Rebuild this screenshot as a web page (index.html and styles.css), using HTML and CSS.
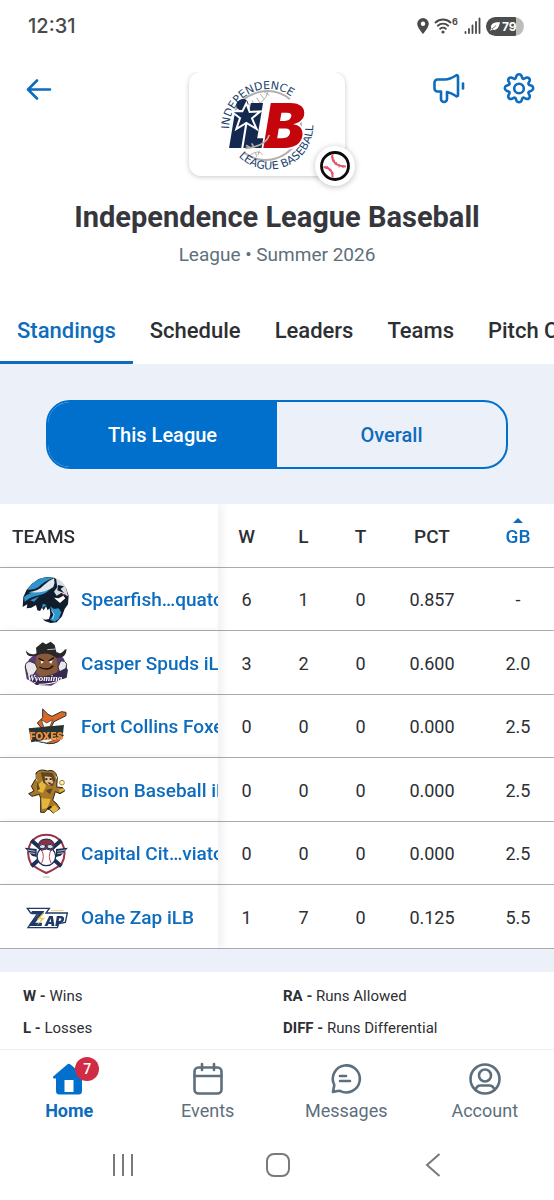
FILE: index.html
```html
<!DOCTYPE html>
<html lang="en">
<head>
  <meta charset="UTF-8" />
  <meta name="viewport" content="width=device-width, initial-scale=1" />
  <title>Independence League Baseball – Standings</title>
  <link rel="stylesheet" href="styles.css">
</head>
<body>

  <!-- Status bar -->
  <div class="status-bar">
    <span class="clock">12:31</span>
    <div class="status-icons">
      <svg width="12" height="18" viewBox="0 0 12 18"><path fill="#4a4a4a" fill-rule="evenodd" d="M6 1a5.800 5.800 0 0 0-5.800 5.800C.2 10.800 6 17 6 17s5.800-6.200 5.800-10.200A5.800 5.800 0 0 0 6 1zm0 3.600a2.200 2.200 0 1 1 0 4.400 2.200 2.200 0 0 1 0-4.400z"/></svg>
      <svg width="25" height="18" viewBox="0 0 25 18">
        <g fill="none" stroke="#4a4a4a" stroke-width="1.900" stroke-linecap="round">
          <path d="M1.500 5.500a11 11 0 0 1 15 0"/>
          <path d="M3.800 8.700a7.500 7.500 0 0 1 10.400 0"/>
          <path d="M6.200 11.800a4 4 0 0 1 5.600 0"/>
        </g>
        <circle cx="9" cy="15" r="1.600" fill="#4a4a4a"/>
        <text class="wifi-gen" x="18" y="8">6</text>
      </svg>
      <svg width="17" height="18" viewBox="0 0 17 18"><path stroke="#4a4a4a" stroke-width="1.800" stroke-linecap="round" d="M1.500 15v1M5 12v4M8.500 8.500V16M12 5v11M15.500 1.500V16"/></svg>
      <div class="battery">
        <svg width="10" height="9" viewBox="0 0 10 9"><path fill="#fff" d="M10 0C6 .5 1 .5 1 5c0 .8.200 1.300.5 1.800L0 8.200l.6.600 1.600-1.300C6.500 9 9 6 10 0z"/><path stroke="#4d4d4d" stroke-width=".7" d="M2 7l4-3.500"/></svg>
        <span>79</span>
      </div>
    </div>
  </div>

  <!-- League header -->
  <header class="league-header">
    <div class="header-row">
      <button class="icon-btn" aria-label="Back">
        <svg width="36" height="36" viewBox="0 0 36 36"><path d="M33 17.500H11.500M20 8.500L11 17.500 20 26.500"/></svg>
      </button>

      <div class="league-logo">
        <div class="logo-card">
          <svg width="156" height="104" viewBox="27 36 468 312" role="img" aria-label="iLB logo">
            <defs>
              <path id="arcTop" d="M147 207a118 120 0 1 1 236 0"/>
              <path id="arcBottom" d="M176 289a130 130 0 0 0 219-124"/>
            </defs>
            <g fill="none" stroke="#b3afad" stroke-width="6">
              <path d="M164 155a108 108 0 0 1 166-37"/>
              <path d="M362 182a106 106 0 0 1-170 96"/>
              <path stroke-width="3" d="M205 145q50-12 60-52M205 130l14 22M216 122l14 22M230 113l12 20M240 102l14 16M250 94l18 12M212 284q24-16 36 0M226 276l4 14M238 272l-4 14M350 185l14 20M350 225l14-12"/>
            </g>
            <text class="logo-ring"><textPath href="#arcTop">INDEPENDENCE</textPath></text>
            <text class="logo-ring"><textPath href="#arcBottom">LEAGUE BASEBALL</textPath></text>
            <g class="logo-letters">
              <text x="146" y="265">i</text>
              <text x="190" y="265">L</text>
              <text class="logo-b" x="250" y="265">B</text>
            </g>
            <path d="M196 265q60-5 72-40M198 256l14 8M215 250l6 10" fill="none" stroke="#b3afad" stroke-width="5"/>
            <path fill="#14294f" stroke="#fff" stroke-width="6" d="M199 130l10 26 32-2-25 21 14 32-31-18-30 18 11-33-27-20h34z"/>
          </svg>
        </div>
        <div class="sport-badge">
          <svg width="32" height="32" viewBox="0 0 32 32">
            <circle cx="16" cy="16" r="13.500" fill="#fff" stroke="#0b0b0b" stroke-width="2.800"/>
            <g fill="none" stroke="#e8526b" stroke-width="2">
              <path d="M13.500 4.500c-1.500 6.500 4 12 13.500 12"/>
              <path d="M4.500 17c6.500.5 9.500 4.500 9 10.500"/>
              <path stroke-width="1" d="M12 7l3 1M13 11l3-1M16 15l1.500-3M20 17.500l.5-3M24 18v-3M7 19l1.500-3M10 21l2-2M12 24l3-1"/>
            </g>
          </svg>
        </div>
      </div>

      <div class="header-actions">
        <button class="icon-btn" aria-label="Announcements">
          <svg width="36" height="36" viewBox="0 0 36 36"><path d="M6.500 7.500H14c4 0 7-1.500 11-4a1.200 1.200 0 0 1 2 1v18.500a1.200 1.200 0 0 1-2 1c-3-2-6-3.500-9-4V27a3 3 0 0 1-6 0V19.500H6.500a3 3 0 0 1-3-3v-6a3 3 0 0 1 3-3z"/><path d="M32 11.500v5"/></svg>
        </button>
        <button class="icon-btn" aria-label="Settings">
          <svg width="36" height="36" viewBox="0 0 36 36"><path d="M15.500 3.800c1-2 4-2 5 0l.7 2c.3.900 1.300 1.300 2.100.9l1.900-1c2.100-.9 4.200 1.200 3.400 3.300l-1 1.900c-.4.800 0 1.800.9 2.100l2.100.7c2.100 1 2.100 4 0 5l-2.100.7c-.9.300-1.300 1.300-.9 2.100l1 1.900c.8 2.200-1.300 4.300-3.400 3.400l-1.900-1c-.8-.4-1.800 0-2.100.9l-.7 2c-1 2.100-4 2.100-5 0l-.7-2c-.3-.9-1.300-1.300-2.100-.9l-1.900 1c-2.100.9-4.200-1.200-3.400-3.400l1-1.900c.4-.8 0-1.800-.9-2.100l-2.100-.7c-2.100-1-2.100-4 0-5l2.100-.7c.9-.3 1.300-1.300.9-2.100l-1-1.900C6.600 6.900 8.700 4.800 10.800 5.700l1.900 1c.8.400 1.800 0 2.100-.9z"/><circle cx="18" cy="16.500" r="4.800"/></svg>
        </button>
      </div>
    </div>

    <h1>Independence League Baseball</h1>
    <p class="subtitle">League • Summer 2026</p>
  </header>

  <!-- Section tabs -->
  <nav class="tabs">
    <a href="#standings" class="active">Standings</a>
    <a href="#schedule">Schedule</a>
    <a href="#leaders">Leaders</a>
    <a href="#teams">Teams</a>
    <a href="#pitch">Pitch Count</a>
  </nav>

  <main>
    <div class="toggle-band">
      <div class="toggle">
        <button class="selected">This League</button>
        <button>Overall</button>
      </div>
    </div>

    <!-- Standings -->
    <div class="table-scroll">
      <table class="standings">
        <colgroup>
          <col class="col-team"><col class="col-num"><col class="col-num"><col class="col-num"><col class="col-wide"><col class="col-wide">
        </colgroup>
        <thead>
          <tr>
            <th class="team" scope="col">TEAMS</th>
            <th scope="col">W</th>
            <th scope="col">L</th>
            <th scope="col">T</th>
            <th scope="col">PCT</th>
            <th scope="col" class="sorted" aria-sort="ascending">GB</th>
          </tr>
        </thead>
        <tbody>
          <tr>
            <td class="team"><div class="team-cell">
              <svg width="48" height="48" viewBox="36 33 144 144">
                <path fill="#101d2c" d="M40 96l10-22 16-18 20-14 24-6 22 2 22 12 14 18 8 24-2 26-10 14-8 22-16 18-18 2-18-6-12-16-2-14-8-2-4-16-14 8-14 2 2-12-14 8z"/>
                <path fill="#2f95cf" d="M52 74q18-28 52-37l28 1q-32 12-46 28-14 10-34 8zM42 96q16-14 52-20l34-16q-12 24-38 30-26 4-46 20z"/>
                <path fill="#dfe8ee" d="M56 82q30-4 46-22 12-12 30-20 4 14-2 26-26 20-74 16z"/>
                <path fill="#d4dde3" d="M138 40q20 8 30 28l6 26-20-10-14 8-8-12 10-14z"/>
                <path fill="#101d2c" d="M144 60l18 4-10 8 10 12-20-8z"/>
                <path fill="#fff" d="M88 142l8-14 5 8 7-12 5 12 6-6 2 18-4 14-12 2-14-8zM132 98l14 2 14-8 6 8-16 14z"/>
                <path fill="#2f95cf" d="M120 124l12 8 14-2 8 12-8 20-12 8-14-6 10-14zM98 116l12 4-14 10zM60 106l28-12-16 16z"/>
                <path fill="#b92232" d="M156 88l12-2-8 8z"/>
                <path fill="none" stroke="#fff" stroke-width="2" d="M96 152l10-4M124 136l8 12-4 14"/>
              </svg>
              <a href="#team-1">Spearfish…quatch</a>
            </div></td>
            <td>6</td><td>1</td><td>0</td><td>0.857</td><td>-</td>
          </tr>
          <tr>
            <td class="team"><div class="team-cell">
              <svg width="48" height="48" viewBox="36 223 144 144">
                <path fill="#5b3a78" d="M44 304l14-24 24-20h62l18 20 10 30-8 26-40 24-42-2-32-18z"/>
                <path fill="#8a5a38" d="M80 270q30-14 58 0l6 40q-8 26-36 26t-34-28z"/>
                <path fill="#292829" d="M48 254q10 16 32 10l-2-18 20-16 10 6 14-8 12 10 6 24q14 4 24-10l6-2q-2 30-32 26-28-22-60-6-30 8-30-16z"/>
                <path fill="none" stroke="#111" stroke-width="4" d="M86 278l16 8M132 276l-16 10M88 304q24 14 42-4"/>
                <path fill="#fff" d="M92 286l10 2-8 6zM128 284l-12 4 8 6z"/>
                <path fill="#e9e9ec" stroke="#333" stroke-width="3" d="M46 304q0-18 16-16l14 6 6 16-12 18-16 2zM144 304l8-18q14-2 18 10l-4 20-16 6z"/>
                <path fill="#392950" d="M54 330q50 14 112-22l8 4-4 24q-44 16-92 22z"/>
                <text class="mark-script" x="52" y="346">Wyoming</text>
                <path fill="none" stroke="#fff" stroke-width="3" d="M86 356q40 0 72-14"/>
                <path stroke="#bbb" stroke-width="3" d="M112 252l26-2"/>
              </svg>
              <a href="#team-2">Casper Spuds iLB</a>
            </div></td>
            <td>3</td><td>2</td><td>0</td><td>0.600</td><td>2.0</td>
          </tr>
          <tr>
            <td class="team"><div class="team-cell">
              <svg width="48" height="48" viewBox="36 24 144 144">
                <path fill="#dc6727" stroke="#283431" stroke-width="3" d="M98 42l16 16 12 6 28-14 14 2 0 10-36 18-8 16-26 8-16-20 16-16zM88 140l72-20q-12 28-44 26z"/>
                <path fill="#fff" stroke="#283431" stroke-width="2" d="M94 74l16 10 18-10-8 20-18 4zM78 138l66-14-8 10-26 10z"/>
                <path fill="#283431" d="M56 100l106-10-4 34-94 18z"/>
                <text class="mark-foxes" x="59" y="134">FOXES</text>
              </svg>
              <a href="#team-3">Fort Collins Foxes</a>
            </div></td>
            <td>0</td><td>0</td><td>0</td><td>0.000</td><td>2.5</td>
          </tr>
          <tr>
            <td class="team"><div class="team-cell">
              <svg width="48" height="48" viewBox="36 214 144 144">
                <path fill="#a77825" stroke="#2c2419" stroke-width="3" d="M78 232q12-14 34-6 24-8 30 20l-2 28 18 2 6 10-14 8-14-6-8 26 10 8 12 16-20 14-16-14-10 12H92V308l-4-12-22 6-10-8 16-8-8-14 14-24z"/>
                <path fill="#e5b63d" d="M82 270l18-18 8 20-10 20-20-8zM94 308l28 2-10 28-16 2zM118 340l16-12 12 12-14 12zM146 282l16-4 2 6-14 6z"/>
                <path fill="#5c4426" d="M92 230l36 2 8 20-8 20-28-10zM82 258l8 22-10 6zM106 284l22-6-8 18z"/>
                <path fill="#e9c18a" d="M104 242l20 2 6 18-14 6-10-8z"/>
                <path fill="#261f17" d="M106 248h6v5h-6zM119 248h6v5h-6zM112 260l14 2-8 4zM110 338l12-8 4 4-12 10z"/>
                <path fill="none" stroke="#fff" stroke-width="2" d="M78 236q-4 14 4 20M138 240l2 10"/>
                <circle cx="156" cy="261" r="7" fill="#fff3c5" stroke="#b08427" stroke-width="3"/>
              </svg>
              <a href="#team-4">Bison Baseball iLB</a>
            </div></td>
            <td>0</td><td>0</td><td>0</td><td>0.000</td><td>2.5</td>
          </tr>
          <tr>
            <td class="team"><div class="team-cell">
              <svg width="48" height="48" viewBox="36 15 144 144">
                <path fill="#fff" stroke="#9b3449" stroke-width="6" d="M62 54q16-25 47-25t47 25q16 30-1 62-16 14-46 28-30-14-46-28-17-32-1-62z"/>
                <path stroke="#1d2f55" stroke-width="12" d="M64 46l90 78M154 46l-90 78"/>
                <path fill="#1d2f55" d="M44 68l36 4v24l-14-4zM174 68l-36 4v24l14-4z"/>
                <path stroke="#fff" stroke-width="2" d="M52 75l24 4M58 83l18 3M166 75l-24 4M160 83l-18 3"/>
                <circle cx="109" cy="94" r="28" fill="#fff" stroke="#1d2f55" stroke-width="4"/>
                <path fill="none" stroke="#c34555" stroke-width="3" d="M94 74q12 20 0 42M124 74q-12 20 0 42"/>
                <path fill="#8b3145" stroke="#1d2f55" stroke-width="3" d="M84 68q0-26 25-26t25 26l-10 8q-15-8-30 0z"/>
                <path fill="#d7dde6" stroke="#1d2f55" stroke-width="3" d="M88 62q10-8 20 0-4 12-18 8zM110 62q10-8 20 0 0 12-16 8z"/>
                <path stroke="#8aa58d" stroke-width="2" d="M99 156h20"/>
              </svg>
              <a href="#team-5">Capital Cit…viators</a>
            </div></td>
            <td>0</td><td>0</td><td>0</td><td>0.000</td><td>2.5</td>
          </tr>
          <tr>
            <td class="team"><div class="team-cell">
              <svg width="48" height="48" viewBox="36 205 144 144">
                <path fill="#fff" stroke="#1f3a68" stroke-width="4" d="M52 248h66l-10 14h64l-6 28-20 4-4 12H54l30-44H62z"/>
                <text class="mark-zap-z" x="58" y="301">Z</text>
                <text class="mark-zap" x="104" y="301">AP</text>
                <path fill="#efc951" d="M104 256l-24 26 14-2-14 20 26-24-14 1z"/>
                <path stroke="#e8cf87" stroke-width="3" d="M122 255h38"/>
              </svg>
              <a href="#team-6">Oahe Zap iLB</a>
            </div></td>
            <td>1</td><td>7</td><td>0</td><td>0.125</td><td>5.5</td>
          </tr>
        </tbody>
      </table>
    </div>

    <!-- Abbreviation key -->
    <div class="legend">
      <div><b>W -</b> Wins</div>
      <div><b>RA -</b> Runs Allowed</div>
      <div><b>L -</b> Losses</div>
      <div><b>DIFF -</b> Runs Differential</div>
    </div>
  </main>

  <!-- App navigation -->
  <nav class="bottom-nav">
    <a href="#home" class="active">
      <span class="nav-icon">
        <svg width="36" height="36" viewBox="0 0 36 36"><path fill="#0070cc" fill-rule="evenodd" d="M16.200 3.500a2.500 2.500 0 0 1 3.300 0l14 11.800c1 1 .4 2.200-.8 2.200h-1.700V30a3.500 3.500 0 0 1-3.500 3.500h-19A3.500 3.500 0 0 1 5 30V17.500H3.300c-1.300 0-1.900-1.200-.8-2.200zM13.500 19v12h9V19z"/></svg>
        <span class="badge">7</span>
      </span>
      Home
    </a>
    <a href="#events">
      <span class="nav-icon">
        <svg width="36" height="36" viewBox="0 0 36 36"><rect x="4.500" y="6.500" width="27" height="26" rx="4"/><path d="M4.500 15h27M12 3v6M24 3v6"/></svg>
      </span>
      Events
    </a>
    <a href="#messages">
      <span class="nav-icon">
        <svg width="36" height="36" viewBox="0 0 36 36"><path d="M5 31l1.300-7A13.500 13.500 0 1 1 12 29.800c-2.200.2-4.500.7-7 1.200z"/><path d="M12 15h6M12 20h10"/></svg>
      </span>
      Messages
    </a>
    <a href="#account">
      <span class="nav-icon">
        <svg width="36" height="36" viewBox="0 0 36 36"><circle cx="18" cy="18" r="14.500"/><circle cx="18" cy="14.500" r="6"/><path d="M8.500 29c1-3.500 3-4.500 5-4.500h9c2 0 4 1 5 4.500"/></svg>
      </span>
      Account
    </a>
  </nav>

  <!-- System navigation -->
  <div class="system-nav">
    <button aria-label="Recent apps"><svg width="24" height="24" viewBox="0 0 24 24"><path d="M3 1v22M12 1v22M21 1v22"/></svg></button>
    <button aria-label="Home screen"><svg width="24" height="24" viewBox="0 0 24 24"><rect x="1" y="1" width="22" height="22" rx="7"/></svg></button>
    <button aria-label="Go back"><svg width="24" height="24" viewBox="0 0 24 24"><path d="M18.500 1L6 12l12.500 11"/></svg></button>
  </div>

</body>
</html>
```
FILE: styles.css
```css
:root {
  --blue: #0070cc;
  --blue-text: #0d6cbd;
  --ink: #2d2f33;
  --slate: #5d6f7c;
  --band: #ebf0f9;
  --line: #a9abb0;
}

*, *::before, *::after { box-sizing: border-box; }

body {
  margin: 0;
  min-height: 100vh;
  display: flex;
  flex-direction: column;
  font-family: Roboto, "Liberation Sans", sans-serif;
  font-size: 18px;
  line-height: 24px;
  color: var(--ink);
  background: #fff;
  overflow-x: hidden;
}
a { text-decoration: none; }
svg { display: block; flex: none; }
button {
  font: inherit;
  padding: 0;
  border: 0;
  background: none;
  cursor: pointer;
}

/* Status bar */
.status-bar {
  display: flex;
  align-items: center;
  justify-content: space-between;
  height: 52px;
  padding: 0 30px 0 28px;
}
.clock {
  font-family: Inter, sans-serif;
  font-size: 20px;
  font-weight: 500;
  color: #4a4a4a;
}
.status-icons {
  display: flex;
  align-items: center;
  gap: 5px;
}
.wifi-gen { font: 700 9px Inter, sans-serif; fill: #4a4a4a; }
.battery {
  display: flex;
  align-items: center;
  gap: 2px;
  height: 19px;
  width: 38px;
  padding-left: 4px;
  border-radius: 10px;
  background: linear-gradient(90deg, #4d4d4d 79%, #bdbdbd 79%);
  color: #fff;
  font: 700 12px Inter, sans-serif;
}

/* League header */
.league-header {
  padding-top: 20px;
  text-align: center;
}
.header-row {
  display: grid;
  grid-template-columns: 1fr auto 1fr;
  align-items: start;
  padding: 0 17px;
}
.icon-btn { width: 36px; height: 36px; }
.icon-btn svg {
  fill: none;
  stroke: var(--blue-text);
  stroke-width: 2.6;
  stroke-linecap: round;
  stroke-linejoin: round;
}
.header-actions {
  display: flex;
  justify-content: flex-end;
  gap: 34px;
}
.league-logo {
  position: relative;
  padding-right: 20px;
}
.logo-card {
  border-radius: 12px;
  background: #fff;
  box-shadow: 0 1px 5px rgba(0, 0, 0, 0.22);
  clip-path: inset(0 -8px -8px -8px);
}
.logo-ring { font: 33px "DejaVu Sans", sans-serif; fill: #1c3f6e; }
.logo-letters { font: italic 900 186px Inter, sans-serif; fill: #14294f; }
.logo-b { fill: #c4060c; stroke: #fff; stroke-width: 10px; paint-order: stroke; }
.sport-badge {
  position: absolute;
  right: 10px;
  bottom: -10px;
  padding: 4px;
  border-radius: 50%;
  background: #fff;
  box-shadow: 0 1px 6px rgba(0, 0, 0, 0.25);
}
h1 {
  margin: 23px 0 8px;
  font-size: 29px;
  line-height: 36px;
  font-weight: 700;
  color: #35373c;
}
.subtitle {
  margin: 0;
  font-size: 19px;
  color: var(--slate);
}

/* Tabs */
.tabs {
  display: flex;
  margin-top: 31px;
  overflow: hidden;
}
.tabs a {
  flex: none;
  padding: 21px 17px 18px;
  border-bottom: 3px solid transparent;
  font-size: 22px;
  font-weight: 500;
  color: var(--ink);
}
.tabs .active {
  color: var(--blue-text);
  border-color: var(--blue-text);
}

/* League / overall switch */
.toggle-band {
  padding: 36px 46px 35px;
  background: var(--band);
}
.toggle {
  display: flex;
  height: 69px;
  border: 2px solid var(--blue);
  border-radius: 24px;
  overflow: hidden;
}
.toggle button {
  flex: 1;
  font-size: 20px;
  font-weight: 500;
  color: var(--blue-text);
}
.toggle .selected {
  background: var(--blue);
  color: #fff;
}

/* Standings table */
.table-scroll {
  overflow: hidden;
  background: #fff;
}
.standings {
  width: 100%;
  min-width: 561px;
  table-layout: fixed;
  border-collapse: separate;
  border-spacing: 0;
}
.col-num { width: 57px; }
.col-wide { width: 86px; }
.standings th,
.standings td {
  height: 64px;
  padding: 2px 0 0;
  border-bottom: 1px solid var(--line);
  text-align: center;
  font-size: 18px;
  font-weight: 400;
}
.standings tbody tr:nth-child(odd) td { height: 63px; }
.standings th { font-size: 19px; font-weight: 500; }
.standings .team {
  position: sticky;
  left: 0;
  text-align: left;
  background: #fff;
  box-shadow: 4px 0 8px rgba(60, 70, 100, 0.08);
}
.standings th.team { padding-left: 12px; }
.team-cell {
  display: flex;
  align-items: center;
  gap: 11px;
  padding-left: 22px;
  overflow: hidden;
  white-space: nowrap;
}
.team-cell a {
  font-size: 19px;
  font-weight: 500;
  color: var(--blue-text);
}
.standings .sorted {
  position: relative;
  color: var(--blue-text);
}
.sorted::before {
  content: "";
  position: absolute;
  top: 14px;
  left: calc(50% - 5px);
  border: 5px solid transparent;
  border-top-width: 0;
  border-bottom-color: var(--blue-text);
}

.mark-script { font: italic 700 27px "Liberation Serif", serif; fill: #fff; }
.mark-foxes { font: 900 30px Inter, sans-serif; fill: #ef8b3c; }
.mark-zap-z { font: italic 900 62px Inter, sans-serif; fill: #1f3a68; }
.mark-zap { font: italic 900 40px Inter, sans-serif; fill: #1f3a68; }

/* Legend */
main { background: var(--band); }
.legend {
  display: grid;
  grid-template-columns: 1fr 1fr;
  row-gap: 8px;
  margin-top: 23px;
  padding: 12px 11px 9px 23px;
  background: #fff;
  font-size: 15px;
}
.legend b { font-weight: 700; }

/* Bottom navigation */
.bottom-nav {
  display: grid;
  grid-template-columns: repeat(4, 1fr);
  height: 81px;
  padding-top: 11px;
  border-top: 1px solid #f0f1f3;
}
.bottom-nav a {
  display: flex;
  flex-direction: column;
  align-items: center;
  gap: 2px;
  color: var(--slate);
}
.bottom-nav .active { color: var(--blue-text); font-weight: 700; }
.nav-icon { position: relative; }
.nav-icon svg {
  fill: none;
  stroke: var(--slate);
  stroke-width: 2.6;
  stroke-linecap: round;
  stroke-linejoin: round;
}
.active .nav-icon svg { stroke: none; }
.badge {
  position: absolute;
  top: -4px;
  right: -12px;
  width: 24px;
  height: 24px;
  border-radius: 50%;
  background: #d02c43;
  color: #fff;
  font-size: 14px;
  font-weight: 500;
  text-align: center;
}

/* System navigation */
.system-nav {
  flex: 1;
  display: grid;
  grid-template-columns: repeat(3, 1fr);
  min-height: 70px;
  padding: 0 44px 0 46px;
}
.system-nav svg {
  margin: auto;
  fill: none;
  stroke: #77797c;
  stroke-width: 2;
}
```
